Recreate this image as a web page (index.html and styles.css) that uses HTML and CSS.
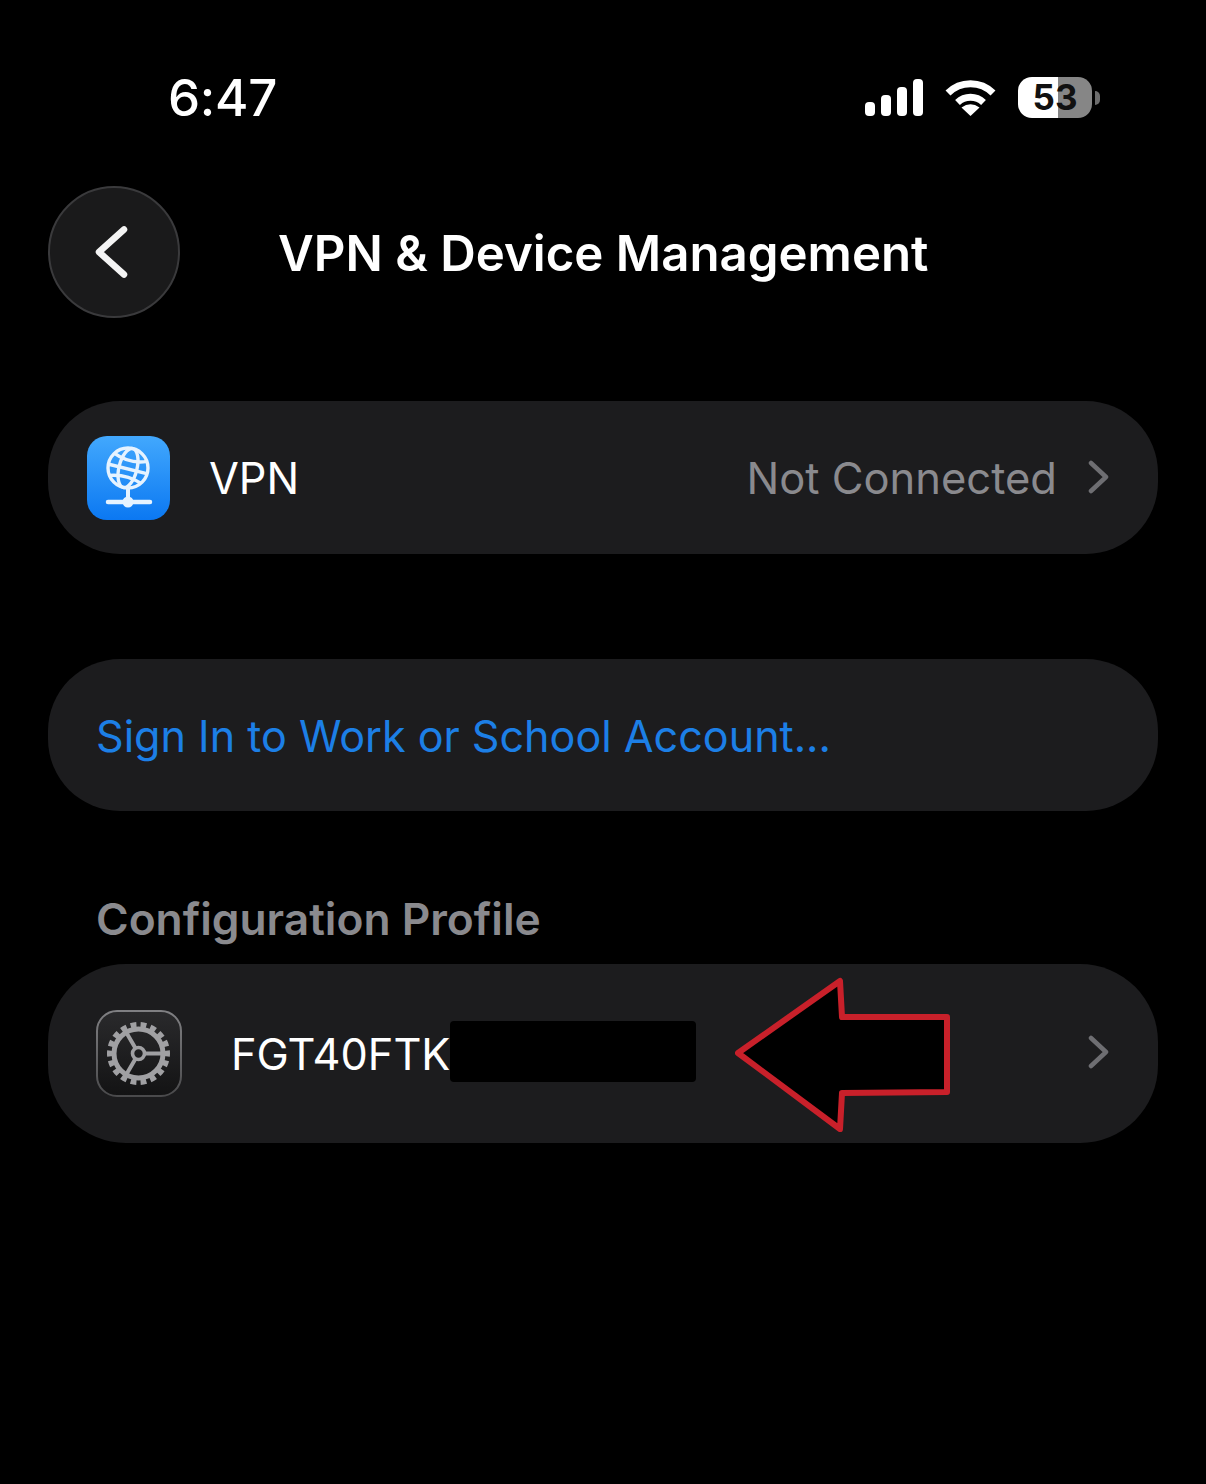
FILE: index.html
```html
<!DOCTYPE html>
<html lang="en">
<head>
<meta charset="utf-8">
<title>VPN &amp; Device Management</title>
<link rel="stylesheet" href="styles.css">
</head>
<body>
<div class="page">
  <div class="status">
    <span class="time">6:47</span>
    <div class="status-icons">
      <div class="signal"><i class="b1"></i><i class="b2"></i><i class="b3"></i><i class="b4"></i></div>
      <svg class="wifi" width="51" height="37" viewBox="0 0 51 37">
        <path d="M3 14 A32 32 0 0 1 48 14" fill="none" stroke="#fff" stroke-width="7"/>
        <path d="M12.500 23.500 A19 19 0 0 1 38.500 23.500" fill="none" stroke="#fff" stroke-width="7"/>
        <path d="M25.500 37 L16.500 28.500 Q25.500 22 34.500 28.500 Z" fill="#fff"/>
      </svg>
      <div class="battery"><span class="battery-num">53</span></div>
      <div class="battery-nub"></div>
    </div>
  </div>

  <div class="header">
    <div class="back">
      <svg width="34" height="52" viewBox="0 0 34 52">
        <path d="M30 3.500 L5 26 L30 48.500" fill="none" stroke="#f4f4f4" stroke-width="6.500" stroke-linecap="round" stroke-linejoin="round"/>
      </svg>
    </div>
    <h1 class="title">VPN &amp; Device Management</h1>
  </div>

  <div class="card card-vpn">
    <svg class="vpn-icon" width="83" height="84" viewBox="0 0 83 84">
      <defs>
        <linearGradient id="vpnBg" x1="0" y1="0" x2="0" y2="1">
          <stop offset="0" stop-color="#42a8fd"/>
          <stop offset="1" stop-color="#0b78f2"/>
        </linearGradient>
      </defs>
      <rect width="83" height="84" rx="20" fill="url(#vpnBg)"/>
      <g fill="none" stroke="#e6f3ff" stroke-width="3.400">
        <circle cx="41" cy="32" r="20"/>
        <g transform="rotate(14 41 32)">
          <ellipse cx="41" cy="32" rx="9" ry="20"/>
          <path d="M24 21 Q41 28 58 21"/>
          <path d="M21.500 33 H60.500"/>
          <path d="M24 44 Q41 38 58 44"/>
        </g>
      </g>
      <path d="M41 52 V66" stroke="#e6f3ff" stroke-width="4"/>
      <path d="M21 66 H63" stroke="#e6f3ff" stroke-width="4.500" stroke-linecap="round"/>
      <circle cx="41" cy="66" r="5.500" fill="#e6f3ff"/>
    </svg>
    <span class="label vpn-label">VPN</span>
    <span class="value">Not Connected</span>
    <svg class="chev" width="21" height="34" viewBox="0 0 21 34">
      <path d="M3 3 L18 17 L3 31" fill="none" stroke="#6e6e72" stroke-width="4.500" stroke-linecap="round" stroke-linejoin="round"/>
    </svg>
  </div>

  <div class="card card-sign">
    <span class="link">Sign In to Work or School Account...</span>
  </div>

  <div class="section-label">Configuration Profile</div>

  <div class="card card-profile">
    <svg class="gear-icon" width="86" height="87" viewBox="0 0 86 87">
      <defs>
        <linearGradient id="gearBg" x1="0" y1="0" x2="0" y2="1">
          <stop offset="0" stop-color="#2a2a2c"/>
          <stop offset="1" stop-color="#131314"/>
        </linearGradient>
        <linearGradient id="gearEdge" x1="0" y1="0" x2="0" y2="1">
          <stop offset="0" stop-color="#808083"/>
          <stop offset="1" stop-color="#4a4a4c"/>
        </linearGradient>
      </defs>
      <rect x="1" y="1" width="84" height="85" rx="20" fill="url(#gearBg)" stroke="url(#gearEdge)" stroke-width="2"/>
      <g fill="none" stroke="#a0a0a3">
        <circle cx="42.500" cy="43.500" r="28.500" stroke-width="6" pathLength="18" stroke-dasharray="0.580 0.420" stroke-dashoffset="0.290"/>
        <circle cx="42.500" cy="43.500" r="24.500" stroke-width="5"/>
        <path d="M49 43.500 H68 M39.500 48.700 L30 65 M39.500 38.300 L30 22" stroke-width="4"/>
        <circle cx="42.500" cy="43.500" r="6" stroke-width="3.600"/>
      </g>
    </svg>
    <span class="label profile-name">FGT40FTK</span>
    <div class="redact"></div>
    <svg class="arrow" width="216" height="156" viewBox="0 0 216 156">
      <path d="M3 76 L105 4 L107 40 H212 V115 L107 116 L105 152 Z" fill="#000" stroke="#c8202a" stroke-width="6" stroke-linejoin="round"/>
    </svg>
    <svg class="chev chev-end" width="21" height="34" viewBox="0 0 21 34">
      <path d="M3 3 L18 17 L3 31" fill="none" stroke="#6e6e72" stroke-width="4.500" stroke-linecap="round" stroke-linejoin="round"/>
    </svg>
  </div>
</div>
</body>
</html>
```

FILE: styles.css
```css
* {
  margin: 0;
  padding: 0;
  box-sizing: border-box;
}
body {
  background: #000;
  font-family: Inter, "Liberation Sans", sans-serif;
  color: #fff;
}
.page {
  width: 1206px;
  height: 1484px;
  padding: 0 48px;
  overflow: hidden;
}

.status {
  display: flex;
  justify-content: space-between;
  align-items: center;
  height: 41px;
  margin-top: 77px;
  padding: 0 58px 0 120px;
}
.time {
  font-size: 51px;
  font-weight: 500;
  letter-spacing: -0.3px;
}
.status-icons {
  display: flex;
  align-items: center;
}
.signal {
  display: flex;
  align-items: flex-end;
  gap: 6px;
  height: 37px;
}
.signal i {
  display: block;
  width: 10px;
  background: #fff;
  border-radius: 4px;
}
.b1 { height: 14px; }
.b2 { height: 21px; }
.b3 { height: 29px; }
.b4 { height: 37px; }
.wifi {
  margin-left: 22px;
}
.battery {
  display: flex;
  align-items: center;
  justify-content: center;
  width: 74px;
  height: 41px;
  margin-left: 22px;
  border-radius: 14px;
  background: linear-gradient(90deg, #fff 0, #fff 54%, #868686 54%, #868686 100%);
}
.battery-num {
  color: #111;
  font-size: 35px;
  font-weight: 700;
  line-height: 1;
}
.battery-nub {
  width: 5px;
  height: 14px;
  margin-left: 3px;
  background: #6c6c6c;
  border-radius: 0 7px 7px 0;
}

.header {
  display: flex;
  align-items: center;
  margin-top: 68px;
}
.back {
  display: flex;
  align-items: center;
  justify-content: center;
  width: 132px;
  height: 132px;
  padding-right: 6px;
  background: #1a1a1b;
  border: 2px solid #3a3a3c;
  border-radius: 50%;
  flex: none;
}
.title {
  margin-left: 98px;
  padding-top: 2px;
  font-size: 49.200px;
  font-weight: 600;
  white-space: nowrap;
}

.card {
  display: flex;
  align-items: center;
  background: #1c1c1e;
  border-radius: 72px;
}
.card-vpn {
  height: 153px;
  margin-top: 83px;
  padding: 0 49px 0 39px;
}
.card-sign {
  height: 152px;
  margin-top: 105px;
  padding: 2px 49px 0 48px;
}
.card-profile {
  height: 179px;
  padding: 0 49px 0 48px;
  border-radius: 78px;
}
.vpn-icon, .gear-icon, .chev, .redact, .arrow {
  flex: none;
}
.label {
  font-size: 43.300px;
  font-weight: 400;
}
.vpn-label {
  margin-left: 39px;
}
.value {
  margin-left: auto;
  color: #8a8a8e;
  font-size: 43.500px;
}
.chev {
  margin: -2px 0 0 31px;
}
.link {
  color: #1c7fe6;
  font-size: 43.100px;
}
.section-label {
  margin: 83px 0 20px 48px;
  color: #8a8a8e;
  font-size: 44.300px;
  line-height: 50px;
  font-weight: 600;
}
.profile-name {
  margin-left: 49px;
}
.redact {
  width: 246px;
  height: 61px;
  margin-top: -4px;
  background: #000;
  border-radius: 4px;
}
.arrow {
  margin: 3px 0 0 39px;
}
.chev-end {
  margin: -4px 0 0 auto;
}
```
